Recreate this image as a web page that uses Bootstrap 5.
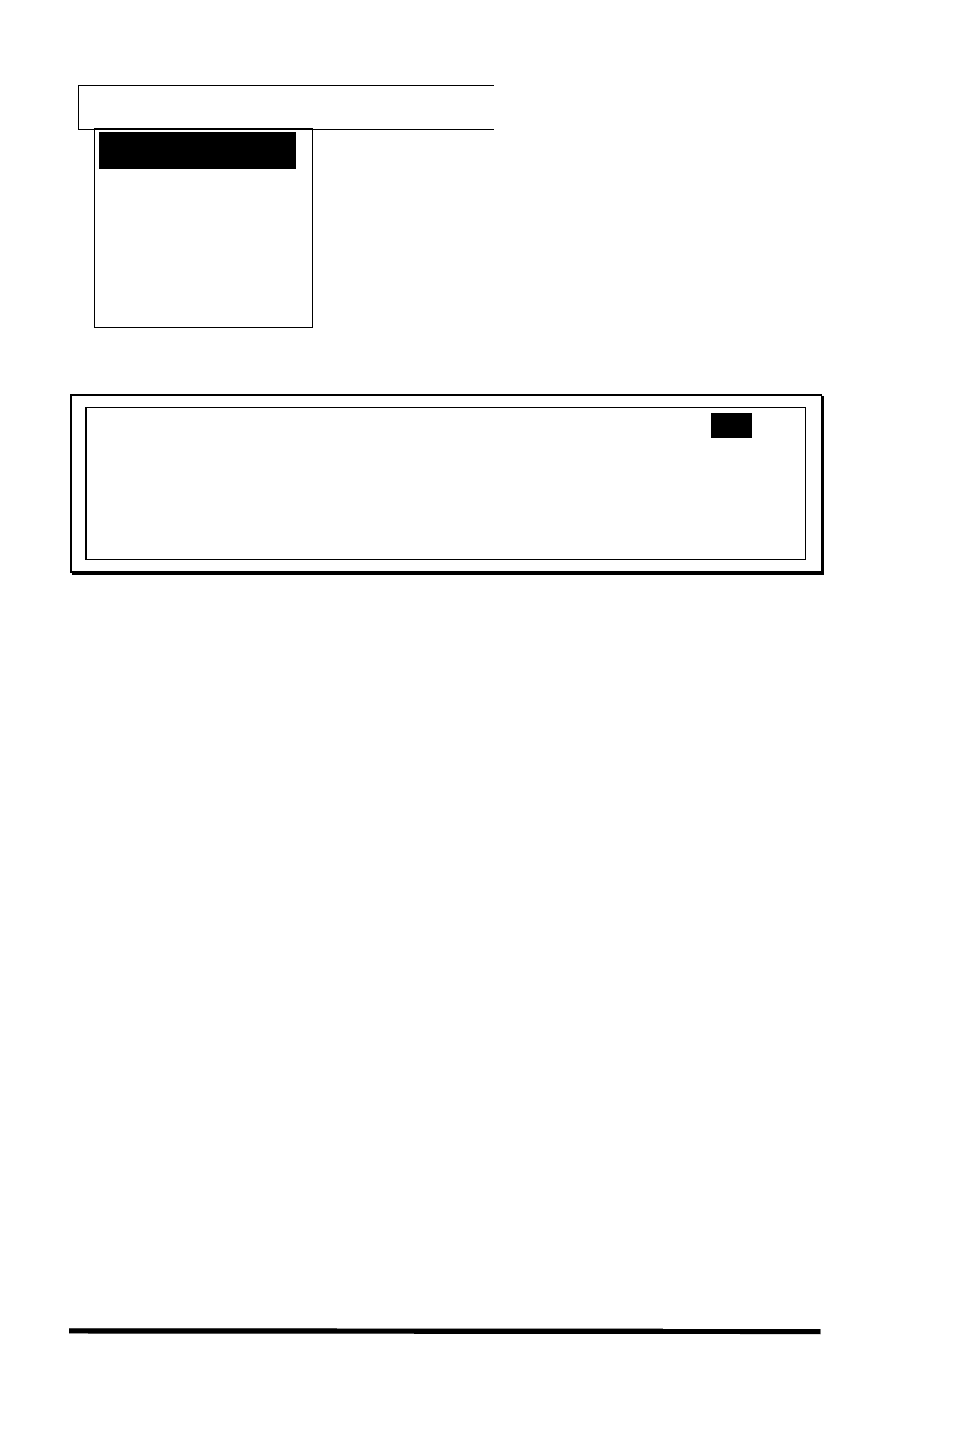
<!DOCTYPE html>
<html lang="en">
<head>
<meta charset="utf-8">
<meta name="viewport" content="width=device-width, initial-scale=1">
<title>Menu and panel</title>
<link rel="stylesheet" href="https://cdn.jsdelivr.net/npm/bootstrap@5.3.0/dist/css/bootstrap.min.css">
<style>
  body { background: #fff; font-family: "Liberation Sans", Arial, sans-serif; }
  .sheet { padding: 85px 132px 0 70px; }
  .menu-strip { width: 55.3%; min-height: 45px; margin-left: 8px; border: 1px solid #000; border-right: 0; }
  .menu-drop { width: 29.1%; min-height: 200px; margin: -2px 0 0 24px; padding: 2px 16px 2px 4px; border: 1px solid #000; border-top-width: 2px; }
  .menu-choice { height: 37px; background: #000; }
  .panel-outer { margin-top: 66px; padding: 11px 15px 11px 13px; border: 2px solid #000; border-right-width: 1px; box-shadow: 2px 2px 0 #000; }
  .panel-inner { min-height: 153px; padding: 5px 53px 5px 5px; border: 1px solid #000; border-left-width: 2px; }
  .panel-field { width: 41px; height: 25px; background: #000; }
  .page-foot { padding: 0 133px 95px 69px; }
</style>
</head>
<body class="d-flex flex-column min-vh-100">
  <main class="sheet">
    <nav aria-label="Menu">
      <div class="menu-strip"></div>
      <div class="menu-drop">
        <div class="menu-choice"></div>
      </div>
    </nav>
    <section class="panel-outer" aria-label="Panel">
      <div class="panel-inner d-flex justify-content-end align-items-start">
        <div class="panel-field"></div>
      </div>
    </section>
  </main>
  <footer class="page-foot mt-auto">
    <!-- Thick rule that slopes down very slightly to the right -->
    <svg class="d-block w-100" height="7" viewBox="0 0 752 7" preserveAspectRatio="none" shape-rendering="crispEdges" aria-hidden="true">
      <path fill="#444" d="M0 0H268V1H0Z"/>
      <path fill="#999" d="M268 0H594V1H268Z"/>
      <path fill="#999" d="M0 5H19V6H0Z"/>
      <path fill="#555" d="M19 5H345V6H19Z"/>
      <path fill="#000" d="M0 1H751V5H0ZM345 5H751V6H345Z"/>
      <path fill="#ddd" d="M671 6H752V7H671Z"/>
      <path fill="#777" d="M751 1H752V6H751Z"/>
    </svg>
  </footer>
<script src="https://cdn.jsdelivr.net/npm/bootstrap@5.3.0/dist/js/bootstrap.bundle.min.js"></script>
</body>
</html>
